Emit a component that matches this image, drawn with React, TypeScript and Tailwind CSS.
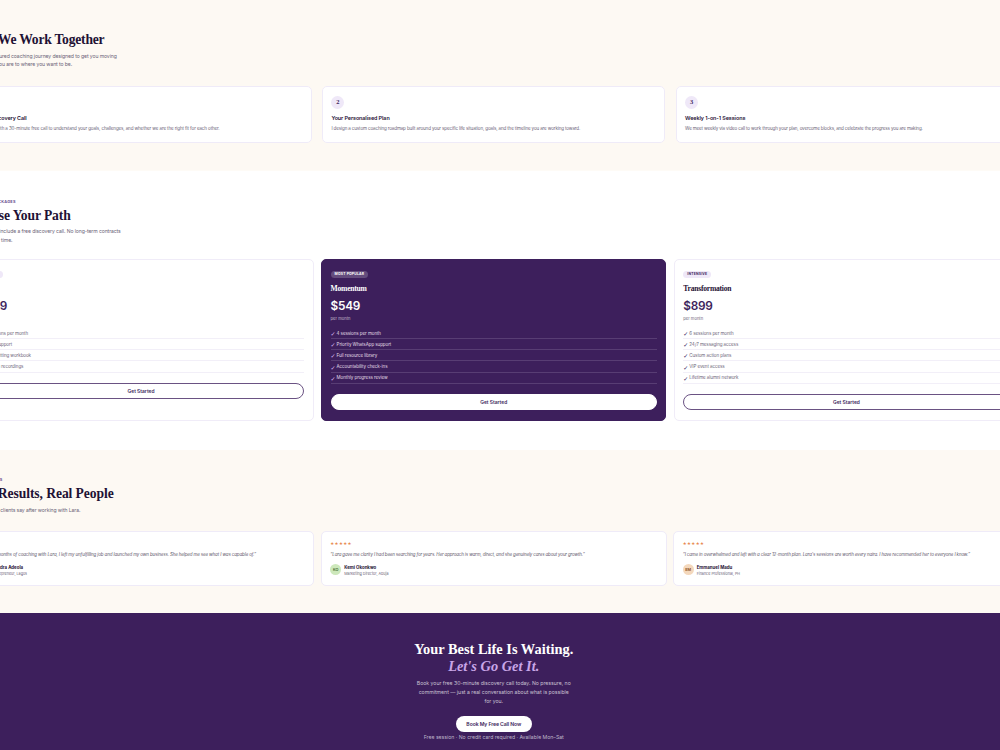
import React from "react";
import clsx from "clsx";

const serif = "font-['Liberation_Serif',serif] font-bold";

type SectionHeadProps = {
  eyebrow?: string;
  eyebrowClass?: string;
  title: string;
  titleClass: string;
  lines: string[];
};

const SectionHead: React.FC<SectionHeadProps> = ({ eyebrow, eyebrowClass, title, titleClass, lines }) => (
  <div className="whitespace-nowrap">
    <div className={clsx("h-[7px] text-[3.9px] leading-[7px] font-semibold text-[#5b3a86]", eyebrowClass)}>
      {eyebrow}
    </div>
    <h2 className={clsx(serif, "mt-[2px] h-[18px] text-[13.6px] leading-[18px] text-[#1f1235]", titleClass)}>
      {title}
    </h2>
    <div className="mt-[2.7px] text-[5.1px] leading-[8.6px] tracking-[-0.1px] text-[#6b6478]">
      {lines.map((line) => (
        <p key={line}>{line}</p>
      ))}
    </div>
  </div>
);

const steps = [
  {
    title: "Free Discovery Call",
    text: "We start with a 30-minute free call to understand your goals, challenges, and whether we are the right fit for each other.",
    textClass: "tracking-[-0.107px]",
  },
  {
    title: "Your Personalised Plan",
    text: "I design a custom coaching roadmap built around your specific life situation, goals, and the timeline you are working toward.",
    textClass: "tracking-[-0.12px]",
  },
  {
    title: "Weekly 1-on-1 Sessions",
    text: "We meet weekly via video call to work through your plan, overcome blocks, and celebrate the progress you are making.",
    textClass: "tracking-[-0.14px]",
  },
];

const plans = [
  {
    badge: "STARTER",
    name: "Clarity",
    price: "$299",
    features: ["2 sessions per month", "Email support", "Goal-setting workbook", "Session recordings"],
  },
  {
    badge: "MOST POPULAR",
    name: "Momentum",
    price: "$549",
    features: [
      "4 sessions per month",
      "Priority WhatsApp support",
      "Full resource library",
      "Accountability check-ins",
      "Monthly progress review",
    ],
    featured: true,
  },
  {
    badge: "INTENSIVE",
    name: "Transformation",
    price: "$899",
    features: [
      "6 sessions per month",
      "24/7 messaging access",
      "Custom action plans",
      "VIP event access",
      "Lifetime alumni network",
    ],
  },
];

const testimonials = [
  {
    quote:
      "“After six months of coaching with Lara, I left my unfulfilling job and launched my own business. She helped me see what I was capable of.”",
    quoteClass: "tracking-[-0.09px]",
    initials: "SA",
    name: "Sandra Adeola",
    role: "Entrepreneur, Lagos",
    avatar: "bg-[#e4d8f4] text-[#3d1f5c]",
  },
  {
    quote:
      "“Lara gave me clarity I had been searching for years. Her approach is warm, direct, and she genuinely cares about your growth.”",
    quoteClass: "tracking-[-0.115px]",
    initials: "KO",
    name: "Kemi Okonkwo",
    role: "Marketing Director, Abuja",
    avatar: "bg-[#cde8bb] text-[#3c6a2c]",
  },
  {
    quote:
      "“I came in overwhelmed and left with a clear 12-month plan. Lara's sessions are worth every naira. I have recommended her to everyone I know.”",
    quoteClass: "tracking-[-0.105px]",
    initials: "EM",
    name: "Emmanuel Madu",
    role: "Finance Professional, PH",
    avatar: "bg-[#f4d8bc] text-[#8a4a1c]",
  },
];

export default function App() {
  return (
    <div className="h-[750px] w-full overflow-hidden bg-white font-[Inter,sans-serif]">
      <div className="-ml-[31.6px] w-[1050.7px]">
        <section className="h-[170.5px] bg-[#fdf9f3] shadow-[0_0_0_100vmax_#fdf9f3] [clip-path:inset(0_-100vmax)] pt-[22px]">
          <SectionHead
            title="How We Work Together"
            titleClass="tracking-[-0.22px]"
            lines={[
              "A clear structured coaching journey designed to get you moving",
              "from where you are to where you want to be.",
            ]}
          />
          <div className="mt-[17px] grid grid-cols-3 gap-[10.4px]">
            {steps.map((step, i) => (
              <div key={step.title} className="h-[57px] rounded-[5px] border border-[#efebf8] bg-white px-[8.3px] pt-[9px] whitespace-nowrap">
                <div className={clsx(serif, "flex size-[13px] items-center justify-center rounded-full bg-[#efe8f8] text-[6.5px] leading-none text-[#3d1f5c]")}>
                  {i + 1}
                </div>
                <h3 className="mt-[5.3px] text-[5.4px] leading-[8px] font-semibold tracking-[-0.07px] text-[#1f1235]">
                  {step.title}
                </h3>
                <p className={clsx("mt-[3px] text-[4.5px] leading-[8px] text-[#6b6478]", step.textClass)}>{step.text}</p>
              </div>
            ))}
          </div>
        </section>

        <section className="h-[279.5px] pt-[27px]">
          <SectionHead
            eyebrow="COACHING PACKAGES"
            eyebrowClass="tracking-[0.25px]"
            title="Choose Your Path"
            titleClass="tracking-[-0.13px]"
            lines={[
              "All packages include a free discovery call. No long-term contracts",
              "— cancel any time.",
            ]}
          />
          <div className="mt-[14.4px] grid grid-cols-3 gap-[7.4px]">
            {plans.map(({ badge, name, price, features, featured }) => (
              <div
                key={name}
                className={clsx(
                  "h-[162.5px] rounded-[5px] border px-[8.5px] pt-[11px] whitespace-nowrap",
                  featured ? "border-[#3d1f5c] bg-[#3d1f5c] text-white" : "border-[#f0ecf8] bg-white text-[#3d1f5c]"
                )}
              >
                <div className="flex h-[7px]">
                  <span
                    className={clsx(
                      "rounded-full px-[4px] text-[3.4px] leading-[7px] font-bold tracking-[0.2px]",
                      featured ? "bg-[#644c7d] text-white" : "bg-[#efe8f8] text-[#3d1f5c]"
                    )}
                  >
                    {badge}
                  </span>
                </div>
                <h3 className={clsx(serif, "mt-[6.2px] text-[7.6px] leading-[10px] tracking-[-0.24px]", !featured && "text-[#1f1235]")}>
                  {name}
                </h3>
                <div className="mt-[4.5px] text-[11.8px] leading-[16px] font-semibold tracking-[-0.25px]">{price}</div>
                <div className={clsx("mt-[0.5px] text-[4.1px] leading-[7px]", featured ? "text-[#c5bcce]" : "text-[#6b6478]")}>
                  per month
                </div>
                <ul className="mt-[6.1px]">
                  {features.map((feature) => (
                    <li
                      key={feature}
                      className={clsx(
                        "flex h-[11.15px] items-center gap-[1.8px] border-b pt-[2px] text-[4.5px] tracking-[-0.07px]",
                        featured ? "border-[#583d74] text-[#e2dde7]" : "border-[#f2eff8] text-[#6b6478]"
                      )}
                    >
                      <span
                        className={clsx(
                          "w-[4.2px] font-['DejaVu_Sans',sans-serif] text-[6px] leading-[6px] font-bold",
                          featured ? "text-[#d8b8f0]" : "text-[#3d1f5c]"
                        )}
                      >
                        ✓
                      </span>
                      {feature}
                    </li>
                  ))}
                </ul>
                <button
                  className={clsx(
                    "mt-[10px] block h-[16px] w-full rounded-full border bg-white text-center text-[4.9px] leading-[14px] font-semibold text-[#3d1f5c]",
                    featured ? "border-white" : "border-[#6a5283]"
                  )}
                >
                  Get Started
                </button>
              </div>
            ))}
          </div>
        </section>

        <section className="h-[163px] bg-[#fdf9f3] shadow-[0_0_0_100vmax_#fdf9f3] [clip-path:inset(0_-100vmax)] pt-[26px]">
          <SectionHead
            eyebrow="TESTIMONIALS"
            eyebrowClass="tracking-[0.42px]"
            title="Real Results, Real People"
            titleClass="tracking-[-0.08px]"
            lines={["See what our clients say after working with Lara."]}
          />
          <div className="mt-[17px] grid grid-cols-3 gap-[6.4px]">
            {testimonials.map((item) => (
              <div key={item.name} className="h-[54.3px] rounded-[5px] border border-[#efebf8] bg-white px-[8.5px] pt-[9px] whitespace-nowrap">
                <div className="font-['DejaVu_Sans',sans-serif] text-[4.4px] leading-[6px] tracking-[0.4px] text-[#e88a4f]">★★★★★</div>
                <p className={clsx("mt-[3.2px] text-[4.4px] leading-[9px] text-[#5c5568] italic", item.quoteClass)}>{item.quote}</p>
                <div className="mt-[4.5px] flex items-center gap-[3px]">
                  <div className={clsx("flex size-[11px] items-center justify-center rounded-full text-[3.8px] font-semibold", item.avatar)}>
                    {item.initials}
                  </div>
                  <div className="pt-[1.2px]">
                    <div className="text-[4.4px] leading-[5.5px] font-bold text-[#1f1235]">{item.name}</div>
                    <div className="text-[3.7px] leading-[5px] text-[#6b6478]">{item.role}</div>
                  </div>
                </div>
              </div>
            ))}
          </div>
        </section>

        <section className="h-[137px] bg-[#3d1f5c] shadow-[0_0_0_100vmax_#3d1f5c] [clip-path:inset(0_-100vmax)] pt-[27.5px] text-center">
          <h2 className={clsx(serif, "text-[14.4px] leading-[17px] text-white")}>
            Your Best Life Is Waiting.
            <br />
            <em className="text-[#c9a6e8]">Let's Go Get It.</em>
          </h2>
          <p className="mt-[4.7px] text-[5.15px] leading-[8.9px] text-[#c9c1d2]">
            Book your free 30-minute discovery call today. No pressure, no
            <br />
            commitment — just a real conversation about what is possible
            <br />
            for you.
          </p>
          <button className="mx-auto mt-[10.5px] block h-[16px] w-[76px] rounded-full bg-white text-[5.1px] leading-[16px] font-semibold tracking-[-0.09px] text-[#3d1f5c]">
            Book My Free Call Now
          </button>
          <p className="mt-[0.3px] text-[5.15px] leading-[8px] text-[#bfb5c9]">
            Free session · No credit card required · Available Mon–Sat
          </p>
        </section>
      </div>
    </div>
  );
}
